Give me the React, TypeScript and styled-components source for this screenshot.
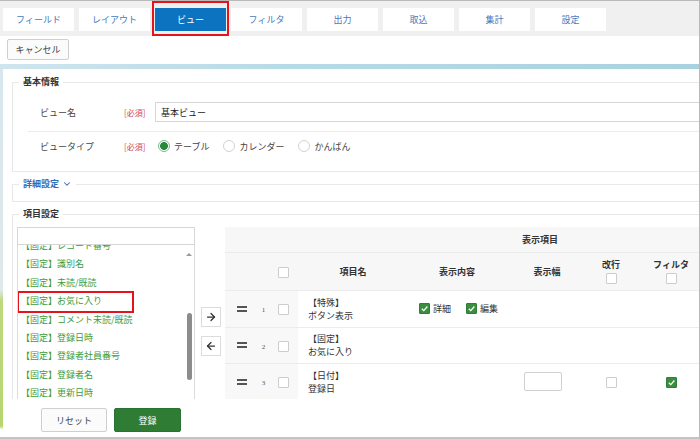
import React from 'react';
import styled, { createGlobalStyle } from 'styled-components';
import { ArrowRight, ArrowLeft, ChevronDown } from 'lucide-react';

const Global = createGlobalStyle`
  html, body { margin: 0; padding: 0; background: #fff; }
  body { font-family: "Noto Sans CJK JP", "Noto Sans", sans-serif; font-size: 9px; color: #333; }
  * { box-sizing: border-box; }
`;

const Frame = styled.div`
  width: 700px;
  height: 439px;
  overflow: hidden;
  display: flex;
  flex-direction: column;
  background: #fff;
  border-top: 1px solid #b9b9b9;
  border-right: 1px solid #b9b9b9;
  border-bottom: 2px solid #c4c4c4;
`;

const TabBar = styled.div`
  flex: 0 0 35px;
  display: flex;
  align-items: flex-start;
  gap: 5px;
  padding: 7px 0 0 3px;
  background: #f0f0f0;
`;

const Tab = styled.div<{ $active?: boolean; $marked?: boolean }>`
  position: relative;
  flex: 0 0 71px;
  height: 23px;
  display: flex;
  align-items: center;
  justify-content: center;
  background: ${p => (p.$active ? '#0b73bf' : '#fff')};
  color: ${p => (p.$active ? '#fff' : '#4a78bd')};
  font-size: 9px;
  &::after {
    content: '';
    display: ${p => (p.$marked ? 'block' : 'none')};
    position: absolute;
    left: -3px;
    right: -3px;
    top: -7px;
    bottom: -5px;
    border: 2px solid #e5141c;
  }
`;

const Toolbar = styled.div`
  flex: 0 0 28px;
  padding: 3px 7px;
`;

const GhostButton = styled.button<{ $w: number; $h: number }>`
  width: ${p => p.$w}px;
  height: ${p => p.$h}px;
  border: 1px solid #cfcfcf;
  border-radius: 2px;
  background: #fbfbfb;
  color: #444;
  font-family: inherit;
  font-size: 9px;
  padding: 0;
`;

const PrimaryButton = styled.button`
  width: 67px;
  height: 24px;
  border: 1px solid #2a7231;
  border-radius: 2px;
  background: #2f7d35;
  color: #fff;
  font-family: inherit;
  font-size: 9px;
  padding: 0;
`;

const BlueStrip = styled.div`
  flex: 0 0 5px;
  background: linear-gradient(90deg, #cfe5ee 0%, #b7dbe6 40%, #a8d2df 100%);
`;

const Lower = styled.div`
  flex: 1;
  display: flex;
  min-height: 0;
`;

const LeftEdge = styled.div`
  flex: 0 0 3px;
  background: linear-gradient(180deg, #d6e7ee 0%, #dfe8ea 60%, #bcd97c 63%, #b6d672 97%, #fff 98%);
`;

const Column = styled.div`
  flex: 1;
  display: flex;
  flex-direction: column;
  min-width: 0;
`;

const Body = styled.div`
  flex: 0 0 330px;
  overflow: hidden;
  padding: 6px 0 0 9px;
`;

const Fieldset = styled.fieldset<{ $gap?: number; $pb?: number }>`
  margin: ${p => p.$gap ?? 0}px -40px 0 0;
  padding: 0 0 ${p => p.$pb ?? 0}px 0;
  border: 1px solid #e8e8e8;
  min-inline-size: 0;
`;

const Legend = styled.legend<{ $link?: boolean }>`
  margin-left: 6px;
  padding: 0 4px;
  font-size: 9px;
  line-height: 14px;
  font-weight: bold;
  color: ${p => (p.$link ? '#2f6cb6' : '#333')};
  display: flex;
  align-items: center;
  gap: 3px;
`;

const FormRow = styled.div<{ $pt: number; $pb: number; $line?: boolean }>`
  display: flex;
  align-items: center;
  margin-left: 15px;
  padding: ${p => p.$pt}px 0 ${p => p.$pb}px 12px;
  border-bottom: ${p => (p.$line ? '1px solid #ebebeb' : 'none')};
`;

const Label = styled.div`
  flex: 0 0 84px;
  color: #444;
`;

const Required = styled.div`
  flex: 0 0 31px;
  color: #d2464a;
  font-size: 8px;
`;

const TextBox = styled.div`
  flex: 1;
  height: 20px;
  border: 1px solid #d6d6d6;
  display: flex;
  align-items: center;
  padding-left: 5px;
  color: #222;
`;

const RadioGroup = styled.div`
  display: flex;
  align-items: center;
  padding-left: 3px;
  height: 16px;
`;

const RadioOption = styled.label`
  display: flex;
  align-items: center;
  gap: 4px;
  margin-right: 14px;
  color: #444;
`;

const RadioDot = styled.span<{ $checked?: boolean }>`
  width: 12px;
  height: 12px;
  border-radius: 50%;
  border: 1px solid ${p => (p.$checked ? '#7fb88c' : '#d2d2d2')};
  background: ${p =>
    p.$checked ? 'radial-gradient(circle, #268a3b 0 3.6px, #fff 4.2px)' : '#fff'};
`;

const ItemArea = styled.div`
  display: flex;
  align-items: flex-start;
  padding: 6px 0 0 4px;
`;

const LeftCol = styled.div`
  flex: 0 0 178px;
  display: flex;
  flex-direction: column;
`;

const SearchBox = styled.div`
  height: 18px;
  border: 1px solid #d6d6d6;
`;

const ListBox = styled.div`
  height: 200px;
  display: flex;
  border: 1px solid #dcdcdc;
  border-top: none;
  overflow: hidden;
`;

const ListItems = styled.div`
  flex: 1;
  margin-top: -8px;
`;

const ListItem = styled.div<{ $marked?: boolean }>`
  position: relative;
  height: 18.4px;
  line-height: 18.4px;
  padding-left: 3px;
  color: #3f9c3a;
  white-space: nowrap;
  &::after {
    content: '';
    display: ${p => (p.$marked ? 'block' : 'none')};
    position: absolute;
    left: -1px;
    width: 113px;
    top: -1px;
    bottom: -2px;
    border: 2px solid #e5141c;
  }
`;

const ScrollTrack = styled.div`
  flex: 0 0 10px;
  display: flex;
  flex-direction: column;
  align-items: center;
  padding-top: 8px;
`;

const ScrollArrow = styled.div`
  width: 0;
  height: 0;
  border-left: 3px solid transparent;
  border-right: 3px solid transparent;
  border-bottom: 3px solid #9a9a9a;
`;

const ScrollThumb = styled.div`
  margin-top: 57px;
  width: 5px;
  height: 67px;
  border-radius: 3px;
  background: #8c8c8c;
`;

const ArrowCol = styled.div`
  flex: 0 0 20px;
  margin: 0 4px 0 6px;
  padding-top: 80px;
  display: flex;
  flex-direction: column;
  gap: 9px;
`;

const ArrowButton = styled.div`
  width: 20px;
  height: 20px;
  border: 1px solid #dcdcdc;
  background: #fff;
  display: flex;
  align-items: center;
  justify-content: center;
  color: #333;
`;

const Table = styled.table`
  flex: 0 0 483px;
  width: 483px;
  border-collapse: collapse;
  table-layout: fixed;
`;

const HeadRow = styled.tr<{ $h: number; $line?: boolean }>`
  height: ${p => p.$h}px;
  background: #f7f7f7;
  border-top: ${p => (p.$line ? '1px solid #ececec' : 'none')};
`;

const Th = styled.th<{ $align?: string; $pl?: number }>`
  padding: 0 0 0 ${p => p.$pl ?? 0}px;
  text-align: ${p => p.$align ?? 'center'};
  font-size: 9px;
  font-weight: bold;
  color: #333;
  vertical-align: middle;
`;

const StackHead = styled.div`
  display: flex;
  flex-direction: column;
  align-items: center;
  gap: 2px;
`;

const BodyRow = styled.tr<{ $h: number }>`
  height: ${p => p.$h}px;
  border-top: 1px solid #ececec;
`;

const Td = styled.td<{ $gray?: boolean; $align?: string; $pl?: number }>`
  padding: 0 0 0 ${p => p.$pl ?? 0}px;
  background: ${p => (p.$gray ? '#f8f8f8' : '#fff')};
  text-align: ${p => p.$align ?? 'left'};
  vertical-align: middle;
  color: #333;
`;

const Handle = styled.div`
  width: 10px;
  height: 6px;
  border-top: 2px solid #555;
  border-bottom: 2px solid #555;
`;

const RowNum = styled.span`
  font-family: "Liberation Serif", serif;
  font-size: 7px;
  color: #555;
`;

const NameLines = styled.div`
  line-height: 13px;
  color: #333;
`;

const Inline = styled.div`
  display: flex;
  align-items: center;
  gap: 3px;
`;

const Spacer = styled.span`
  width: 9px;
`;

const CheckBox = styled.span<{ $checked?: boolean }>`
  display: inline-flex;
  align-items: center;
  justify-content: center;
  width: 11px;
  height: 11px;
  border-radius: 1px;
  border: 1px solid ${p => (p.$checked ? '#2d7f35' : '#cdcdcd')};
  background: ${p => (p.$checked ? '#3b8e3f' : '#fff')};
  vertical-align: middle;
`;

const WidthBox = styled.div`
  width: 38px;
  height: 19px;
  border: 1px solid #d0d0d0;
  border-radius: 2px;
`;

const Footer = styled.div`
  flex: 1;
  display: flex;
  align-items: flex-start;
  gap: 7px;
  padding: 9px 0 0 38px;
  background: #fff;
`;

const Check = ({ checked }: { checked?: boolean }) => (
  <CheckBox $checked={checked}>
    {checked && (
      <svg width="9" height="9" viewBox="0 0 10 10">
        <polyline points="2,5.2 4.2,7.4 8.2,2.8" fill="none" stroke="#fff" strokeWidth="1.4" />
      </svg>
    )}
  </CheckBox>
);

const tabs = ['フィールド', 'レイアウト', 'ビュー', 'フィルタ', '出力', '取込', '集計', '設定'];

const items = [
  '【固定】レコード番号',
  '【固定】識別名',
  '【固定】未読/既読',
  '【固定】お気に入り',
  '【固定】コメント未読/既読',
  '【固定】登録日時',
  '【固定】登録者社員番号',
  '【固定】登録者名',
  '【固定】更新日時',
];

export default function App() {
  return (
    <>
      <Global />
      <Frame>
        <TabBar>
          {tabs.map(t => (
            <Tab key={t} $active={t === 'ビュー'} $marked={t === 'ビュー'}>
              {t}
            </Tab>
          ))}
        </TabBar>
        <Toolbar>
          <GhostButton $w={62} $h={21}>キャンセル</GhostButton>
        </Toolbar>
        <BlueStrip />
        <Lower>
          <LeftEdge />
          <Column>
            <Body>
              <Fieldset $pb={11}>
                <Legend>基本情報</Legend>
                <FormRow $pt={13} $pb={9} $line>
                  <Label>ビュー名</Label>
                  <Required>[必須]</Required>
                  <TextBox>基本ビュー</TextBox>
                </FormRow>
                <FormRow $pt={6} $pb={6}>
                  <Label>ビュータイプ</Label>
                  <Required>[必須]</Required>
                  <RadioGroup>
                    <RadioOption>
                      <RadioDot $checked />
                      テーブル
                    </RadioOption>
                    <RadioOption>
                      <RadioDot />
                      カレンダー
                    </RadioOption>
                    <RadioOption>
                      <RadioDot />
                      かんばん
                    </RadioOption>
                  </RadioGroup>
                </FormRow>
              </Fieldset>
              <Fieldset $gap={5} $pb={10}>
                <Legend $link>
                  詳細設定
                  <ChevronDown size={10} strokeWidth={2.5} />
                </Legend>
              </Fieldset>
              <Fieldset $gap={5}>
                <Legend>項目設定</Legend>
                <ItemArea>
                  <LeftCol>
                    <SearchBox />
                    <ListBox>
                      <ListItems>
                        {items.map(it => (
                          <ListItem key={it} $marked={it === '【固定】お気に入り'}>
                            {it}
                          </ListItem>
                        ))}
                      </ListItems>
                      <ScrollTrack>
                        <ScrollArrow />
                        <ScrollThumb />
                      </ScrollTrack>
                    </ListBox>
                  </LeftCol>
                  <ArrowCol>
                    <ArrowButton>
                      <ArrowRight size={12} strokeWidth={2.5} />
                    </ArrowButton>
                    <ArrowButton>
                      <ArrowLeft size={12} strokeWidth={2.5} />
                    </ArrowButton>
                  </ArrowCol>
                  <Table>
                    <colgroup>
                      <col style={{ width: 30 }} />
                      <col style={{ width: 17 }} />
                      <col style={{ width: 26 }} />
                      <col style={{ width: 110 }} />
                      <col style={{ width: 98 }} />
                      <col style={{ width: 82 }} />
                      <col style={{ width: 46 }} />
                      <col style={{ width: 74 }} />
                    </colgroup>
                    <thead>
                      <HeadRow $h={25}>
                        <Th colSpan={8} $align="left" $pl={297}>
                          表示項目
                        </Th>
                      </HeadRow>
                      <HeadRow $h={38} $line>
                        <Th />
                        <Th />
                        <Th $align="left" $pl={6}>
                          <Check />
                        </Th>
                        <Th>項目名</Th>
                        <Th>表示内容</Th>
                        <Th>表示幅</Th>
                        <Th>
                          <StackHead>
                            改行
                            <Check />
                          </StackHead>
                        </Th>
                        <Th>
                          <StackHead>
                            フィルタ
                            <Check />
                          </StackHead>
                        </Th>
                      </HeadRow>
                    </thead>
                    <tbody>
                      <BodyRow $h={37}>
                        <Td $gray $pl={12}>
                          <Handle />
                        </Td>
                        <Td $gray $align="center">
                          <RowNum>1</RowNum>
                        </Td>
                        <Td $gray $pl={6}>
                          <Check />
                        </Td>
                        <Td $pl={10}>
                          <NameLines>
                            【特殊】
                            <br />
                            ボタン表示
                          </NameLines>
                        </Td>
                        <Td $pl={11}>
                          <Inline>
                            <Check checked />
                            詳細
                            <Spacer />
                            <Check checked />
                            編集
                          </Inline>
                        </Td>
                        <Td />
                        <Td />
                        <Td />
                      </BodyRow>
                      <BodyRow $h={36}>
                        <Td $gray $pl={12}>
                          <Handle />
                        </Td>
                        <Td $gray $align="center">
                          <RowNum>2</RowNum>
                        </Td>
                        <Td $gray $pl={6}>
                          <Check />
                        </Td>
                        <Td $pl={10}>
                          <NameLines>
                            【固定】
                            <br />
                            お気に入り
                          </NameLines>
                        </Td>
                        <Td />
                        <Td />
                        <Td />
                        <Td />
                      </BodyRow>
                      <BodyRow $h={37}>
                        <Td $gray $pl={12}>
                          <Handle />
                        </Td>
                        <Td $gray $align="center">
                          <RowNum>3</RowNum>
                        </Td>
                        <Td $gray $pl={6}>
                          <Check />
                        </Td>
                        <Td $pl={10}>
                          <NameLines>
                            【日付】
                            <br />
                            登録日
                          </NameLines>
                        </Td>
                        <Td />
                        <Td $pl={18}>
                          <WidthBox />
                        </Td>
                        <Td $align="center">
                          <Check />
                        </Td>
                        <Td $align="center">
                          <Check checked />
                        </Td>
                      </BodyRow>
                    </tbody>
                  </Table>
                </ItemArea>
              </Fieldset>
            </Body>
            <Footer>
              <GhostButton $w={66} $h={24}>リセット</GhostButton>
              <PrimaryButton>登録</PrimaryButton>
            </Footer>
          </Column>
        </Lower>
      </Frame>
    </>
  );
}
